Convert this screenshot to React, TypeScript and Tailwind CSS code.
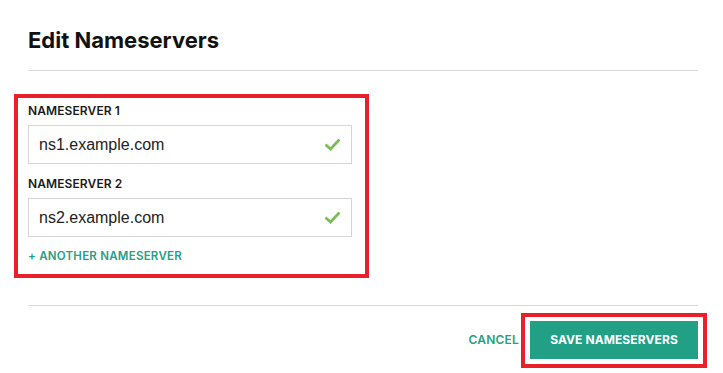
import React from "react";

function Check() {
  return (
    <svg width="15" height="12" viewBox="0 0 15 12" className="shrink-0">
      <path d="M1.5 6.5 L5.5 10 L13.5 1.5" fill="none" stroke="#7cbd58" strokeWidth="2.8" strokeLinecap="square" />
    </svg>
  );
}

function Field({ label, value, mt }: { label: string; value: string; mt: string }) {
  return (
    <div className={mt}>
      <div className="text-[12px] leading-[16px] font-semibold text-[#1a1a1a] tracking-[0.1px]">
        {label}
      </div>
      <div className="mt-[6px] h-[39px] border border-[#d6d6d6] flex items-center pl-[10px] pr-[11px]">
        <span className="flex-1 text-[16px] text-[#222]" style={{ fontFamily: "'Liberation Sans', Arial, sans-serif" }}>
          {value}
        </span>
        <Check />
      </div>
    </div>
  );
}

export default function App() {
  return (
    <div className="w-[723px] h-[373px] bg-white relative overflow-hidden" style={{ fontFamily: "Inter, sans-serif" }}>
      <div className="pl-[28px] pr-[25px] pt-[26px]">
        <h1 className="text-[22px] leading-[28px] font-bold text-[#111]">Edit Nameservers</h1>
        <div className="mt-[16px] h-px bg-[#d9d9d9]" />
        <div className="relative w-[324px] mt-[32px] pb-[2px]">
          <div className="absolute -left-[14px] -right-[17px] -top-[9px] -bottom-[12px] border-4 border-[#e8202a] pointer-events-none" />
          <Field label="NAMESERVER 1" value="ns1.example.com" mt="" />
          <Field label="NAMESERVER 2" value="ns2.example.com" mt="mt-[12px]" />
          <div className="mt-[11px] text-[11.5px] leading-[16px] font-semibold text-[#26a086] tracking-[0.25px]">
            + ANOTHER NAMESERVER
          </div>
        </div>
        <div className="mt-[39px] h-px bg-[#d9d9d9]" />
        <div className="mt-[15px] flex justify-end items-center">
          <span className="text-[12px] font-semibold text-[#26a086] tracking-[0.2px] mr-[11px]">CANCEL</span>
          <div className="relative">
            <div className="absolute -left-[9px] -right-[9px] -top-[8px] -bottom-[9px] border-4 border-[#e8202a] pointer-events-none" />
            <button className="w-[168px] h-[38px] bg-[#22a085] text-white text-[12px] font-bold tracking-[0.1px]">
              SAVE NAMESERVERS
            </button>
          </div>
        </div>
      </div>
    </div>
  );
}
